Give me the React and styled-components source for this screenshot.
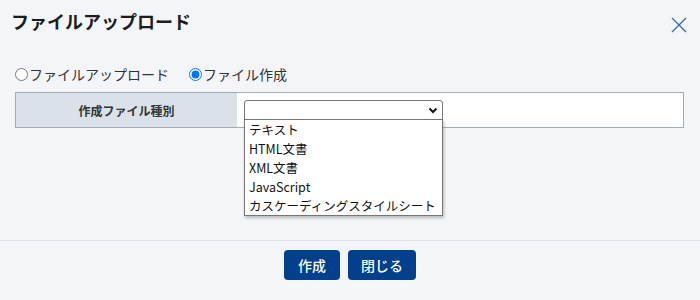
import React, { useState } from 'react';
import styled, { createGlobalStyle } from 'styled-components';

const GlobalStyle = createGlobalStyle`
    body {
        margin: 0;
        background: #f4f5f9;
        font-family: "Noto Sans CJK JP", "Noto Sans", sans-serif;
        color: #222;
    }
`

const Dialog = styled.div`
    display: flex;
    flex-direction: column;
    width: 700px;
    height: 300px;
    box-sizing: border-box;
`

const Header = styled.div`
    display: flex;
    justify-content: space-between;
    align-items: flex-start;
    padding: 10px 13px 0 11px;
`

const Title = styled.h1`
    margin: 0;
    font-size: 18px;
    line-height: 22px;
    font-weight: 700;
    color: #1c1c1c;
`

const CloseButton = styled.button`
    margin-top: 7px;
    padding: 0;
    border: none;
    background: none;
    width: 16px;
    height: 16px;
    cursor: pointer;
    svg { display: block; }
`

const Body = styled.div`
    flex: 1;
    padding: 0 16px 0 15px;
`

const RadioRow = styled.div`
    display: flex;
    gap: 20px;
    margin-top: 31px;
    line-height: 20px;
    font-size: 14px;
    color: #333;
`

const RadioLabel = styled.label`
    display: flex;
    align-items: center;
    input {
        margin: 0 1px 0 0;
        width: 13px;
        height: 13px;
    }
`

const FormTable = styled.div`
    display: grid;
    grid-template-columns: 221px 1fr;
    margin-top: 8px;
    border: 1px solid #a3abb7;
    height: 36px;
    box-sizing: border-box;
`

const LabelCell = styled.div`
    display: flex;
    align-items: center;
    justify-content: center;
    background: #dae1e8;
    font-size: 12px;
    font-weight: 700;
    color: #333;
`

const ValueCell = styled.div`
    background: #fff;
    padding: 7px 6px 7px 7px;
`

const SelectWrap = styled.div`
    position: relative;
    width: 199px;
`

const SelectBox = styled.div`
    height: 20px;
    box-sizing: border-box;
    border: 1px solid #767676;
    border-radius: 3px 3px 0 0;
    background: #fff;
    display: flex;
    justify-content: flex-end;
    align-items: center;
    padding-right: 4px;
`

const OptionList = styled.ul`
    position: absolute;
    top: 19px;
    left: 0;
    width: 199px;
    box-sizing: border-box;
    margin: 0;
    padding: 0;
    list-style: none;
    background: #fff;
    border: 1px solid #767676;
    box-shadow: 1px 2px 3px rgba(0, 0, 0, 0.25);
    z-index: 2;
`

const Option = styled.li`
    height: 19px;
    line-height: 19px;
    padding-left: 4px;
    font-size: 12.5px;
    color: #111;
    white-space: nowrap;
`

const Footer = styled.div`
    height: 60px;
    box-sizing: border-box;
    border-top: 1px solid #dfe2e8;
    display: flex;
    justify-content: center;
    align-items: flex-start;
    gap: 8px;
    padding-top: 9px;
`

const Button = styled.button`
    height: 30px;
    padding: 0 ${props => props.wide ? 13 : 14}px;
    border: none;
    border-radius: 4px;
    background: #023f8c;
    color: #fff;
    font-family: inherit;
    font-size: 14px;
    font-weight: 500;
    cursor: pointer;
`

const fileTypes = ['テキスト', 'HTML文書', 'XML文書', 'JavaScript', 'カスケーディングスタイルシート']

export default function App() {
    const [mode, setMode] = useState('create')

    return (
        <Dialog>
            <GlobalStyle />
            <Header>
                <Title>ファイルアップロード</Title>
                <CloseButton aria-label="閉じる">
                    <svg width="16" height="16" viewBox="0 0 16 16">
                        <path d="M1 1 L15 15 M15 1 L1 15" stroke="#2f6bc4" strokeWidth="1.3" fill="none" />
                    </svg>
                </CloseButton>
            </Header>
            <Body>
                <RadioRow>
                    <RadioLabel>
                        <input type="radio" name="mode" checked={mode === 'upload'} onChange={() => setMode('upload')} />
                        ファイルアップロード
                    </RadioLabel>
                    <RadioLabel>
                        <input type="radio" name="mode" checked={mode === 'create'} onChange={() => setMode('create')} />
                        ファイル作成
                    </RadioLabel>
                </RadioRow>
                <FormTable>
                    <LabelCell>作成ファイル種別</LabelCell>
                    <ValueCell>
                        <SelectWrap>
                            <SelectBox>
                                <svg width="10" height="7" viewBox="0 0 10 7">
                                    <path d="M1.5 1.5 L5 5 L8.5 1.5" stroke="#111" strokeWidth="2" fill="none" />
                                </svg>
                            </SelectBox>
                            <OptionList>
                                {fileTypes.map(t => <Option key={t}>{t}</Option>)}
                            </OptionList>
                        </SelectWrap>
                    </ValueCell>
                </FormTable>
            </Body>
            <Footer>
                <Button>作成</Button>
                <Button wide>閉じる</Button>
            </Footer>
        </Dialog>
    );
}
